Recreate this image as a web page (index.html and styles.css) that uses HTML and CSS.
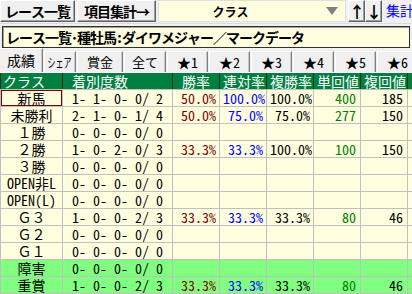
FILE: index.html
```html
<!DOCTYPE html>
<html lang="ja">
<head>
    <meta charset="UTF-8" />
    <title>レース一覧</title>
    <link rel="stylesheet" href="styles.css">
</head>
<body>
    <div class="toolbar">
        <button class="btn btn-main">レース一覧</button>
        <button class="btn btn-item">項目集計→</button>
        <div class="combo">
            <span class="combo-text">クラス</span>
            <span class="combo-arrow"></span>
        </div>
        <div class="arrows">
            <button class="btn btn-arrow">↑</button>
            <button class="btn btn-arrow">↓</button>
        </div>
        <span class="link">集計→</span>
    </div>

    <div class="titlebox">レース一覧･種牡馬:ダイワメジャー／マークデータ</div>

    <div class="tabs">
        <div class="tab active">成績</div>
        <div class="tab tab-share"><span class="narrow">シェア</span></div>
        <div class="tab tab-prize">賞金</div>
        <div class="tab tab-all">全て</div>
        <div class="tab">★1</div>
        <div class="tab">★2</div>
        <div class="tab">★3</div>
        <div class="tab">★4</div>
        <div class="tab">★5</div>
        <div class="tab">★6</div>
    </div>

    <table class="grid">
        <colgroup>
            <col class="c-class"><col class="c-count">
            <col class="c-num"><col class="c-num"><col class="c-num">
            <col class="c-num"><col class="c-num"><col class="c-num">
        </colgroup>
        <thead>
            <tr>
                <th class="h-left">クラス</th>
                <th class="h-count">着別度数</th>
                <th>勝率</th>
                <th>連対率</th>
                <th>複勝率</th>
                <th>単回値</th>
                <th>複回値</th>
                <th></th>
            </tr>
        </thead>
        <tbody>
            <tr>
                <td class="cls selected">新馬</td><td class="cnt">1- 1- 0- 0/ 2</td>
                <td class="win">50.0%</td><td class="ren">100.0%</td><td class="fuku">100.0%</td>
                <td class="tan">400</td><td class="fkv">185</td><td></td>
            </tr>
            <tr>
                <td class="cls">未勝利</td><td class="cnt">2- 1- 0- 1/ 4</td>
                <td class="win">50.0%</td><td class="ren">75.0%</td><td class="fuku">75.0%</td>
                <td class="tan">277</td><td class="fkv">150</td><td></td>
            </tr>
            <tr>
                <td class="cls">１勝</td><td class="cnt">0- 0- 0- 0/ 0</td>
                <td></td><td></td><td></td><td></td><td></td><td></td>
            </tr>
            <tr>
                <td class="cls">２勝</td><td class="cnt">1- 0- 2- 0/ 3</td>
                <td class="win">33.3%</td><td class="ren">33.3%</td><td class="fuku">100.0%</td>
                <td class="tan">100</td><td class="fkv">150</td><td></td>
            </tr>
            <tr>
                <td class="cls">３勝</td><td class="cnt">0- 0- 0- 0/ 0</td>
                <td></td><td></td><td></td><td></td><td></td><td></td>
            </tr>
            <tr>
                <td class="cls">OPEN非L</td><td class="cnt">0- 0- 0- 0/ 0</td>
                <td></td><td></td><td></td><td></td><td></td><td></td>
            </tr>
            <tr>
                <td class="cls">OPEN(L)</td><td class="cnt">0- 0- 0- 0/ 0</td>
                <td></td><td></td><td></td><td></td><td></td><td></td>
            </tr>
            <tr>
                <td class="cls">Ｇ３</td><td class="cnt">1- 0- 0- 2/ 3</td>
                <td class="win">33.3%</td><td class="ren">33.3%</td><td class="fuku">33.3%</td>
                <td class="tan">80</td><td class="fkv">46</td><td></td>
            </tr>
            <tr>
                <td class="cls">Ｇ２</td><td class="cnt">0- 0- 0- 0/ 0</td>
                <td></td><td></td><td></td><td></td><td></td><td></td>
            </tr>
            <tr>
                <td class="cls">Ｇ１</td><td class="cnt">0- 0- 0- 0/ 0</td>
                <td></td><td></td><td></td><td></td><td></td><td></td>
            </tr>
            <tr class="green">
                <td class="cls">障害</td><td class="cnt">0- 0- 0- 0/ 0</td>
                <td></td><td></td><td></td><td></td><td></td><td></td>
            </tr>
            <tr class="green">
                <td class="cls">重賞</td><td class="cnt">1- 0- 0- 2/ 3</td>
                <td class="win">33.3%</td><td class="ren">33.3%</td><td class="fuku">33.3%</td>
                <td class="tan">80</td><td class="fkv">46</td><td></td>
            </tr>
        </tbody>
    </table>
</body>
</html>
```

FILE: styles.css
```css
/* Windows-style grid window */
body {
    margin: 0;
    background: #f0f0f0;
    font-family: "Noto Sans Mono CJK JP", "Noto Sans CJK JP", monospace;
    font-size: 14px;
    color: #000;
    overflow: hidden;
    width: 412px;
    height: 294px;
}
.toolbar {
    display: flex;
    align-items: flex-start;
    gap: 2px;
    height: 24px;
    box-sizing: border-box;
    border-bottom: 1px solid #dcdcdc;
    overflow: hidden;
}
.toolbar > * {
    flex: none;
}
.btn {
    height: 22px;
    padding: 0;
    margin: 0;
    font-family: inherit;
    background: #f0f0f0;
    border: 1px solid;
    border-color: #fff #606060 #606060 #fff;
    box-shadow: inset -1px -1px 0 #a0a0a0;
    line-height: 19px;
    color: #000;
}
.btn-main {
    width: 75px;
    font-weight: 700;
    font-size: 14px;
    letter-spacing: -1px;
}
.btn-item {
    width: 79px;
    font-weight: 700;
    font-size: 14px;
    letter-spacing: -1px;
}
.combo {
    width: 188px;
    height: 22px;
    box-sizing: border-box;
    background: #ffffe0;
    border: 1px solid #e0e0e0;
    display: flex;
    align-items: center;
}
.combo-text {
    flex: 1;
    text-align: center;
    font-weight: 700;
    font-size: 12px;
    padding-right: 24px;
}
.combo-arrow {
    width: 0;
    height: 0;
    border-left: 6px solid transparent;
    border-right: 6px solid transparent;
    border-top: 8px solid #808080;
    margin-right: 7px;
}
.arrows {
    display: flex;
}
.btn-arrow {
    width: 17px;
    font-weight: 700;
    font-size: 16px;
}
.link {
    color: #0000ff;
    font-size: 14px;
    line-height: 21px;
    margin-left: 2px;
    white-space: nowrap;
}
.titlebox {
    margin: 2px 2px 0 2px;
    height: 22px;
    box-sizing: border-box;
    background: #ffffe0;
    border: 1px solid #303030;
    box-shadow: inset 1px 1px 0 #a0a0a0;
    font-weight: 700;
    font-size: 14px;
    letter-spacing: -1px;
    line-height: 20px;
    padding-left: 3px;
    white-space: nowrap;
    overflow: hidden;
}
.tabs {
    display: flex;
    align-items: flex-end;
    height: 25px;
    box-sizing: border-box;
    padding-top: 1px;
    border-bottom: 1px solid #fff;
    white-space: nowrap;
}
.tab {
    flex: none;
    width: 41px;
    height: 21px;
    box-sizing: border-box;
    border-left: 1px solid #fff;
    border-top: 1px solid #fff;
    border-right: 1px solid #808080;
    box-shadow: inset -1px 0 0 #c8c8c8;
    text-align: center;
    font-size: 14px;
    line-height: 20px;
    margin-left: 1px;
}
.tab.active {
    width: 43px;
    height: 24px;
    margin-left: 0;
    line-height: 22px;
    border-left: none;
}
.tab-share { width: 32px; font-size: 13px; }
.tab-share .narrow {
    display: inline-block;
    transform: scaleX(0.62);
    transform-origin: center;
    margin: 0 -8px;
}
.tab-prize { width: 46px; font-size: 13px; }
.tab-all { width: 42px; font-size: 13px; }

.grid {
    table-layout: fixed;
    width: 454px;
    border-collapse: collapse;
    background: #ffffe0;
}
.c-class { width: 62px; }
.c-count { width: 110px; }
.c-num { width: 47px; }
.grid th,
.grid td {
    height: 16px;
    padding: 0 3px;
    line-height: 16px;
    white-space: nowrap;
    border: 1px solid #c0c0c0;
    text-align: right;
    font-weight: 400;
}
.grid td { overflow: hidden; }
.grid th {
    background: #008040;
    color: #fff;
    text-align: center;
    border-color: #003018;
    border-top: none;
    border-bottom-color: #c0c0c0;
}
.grid th.h-left { text-align: left; padding-left: 2px; }
.grid th.h-count { text-align: left; padding-left: 9px; }
.grid td.cls { text-align: center; padding: 0; }
.grid td.cnt { text-align: left; padding-left: 9px; }
.grid td.selected { box-shadow: inset 0 0 0 1px #800000; }
.win { color: #800000; }
.ren { color: #0000ff; }
.fuku { color: #000; }
.tan { color: #008000; }
.grid td.tan,
.grid td.fkv { padding-right: 4px; }
.green td { background: #80ff80; }
```
